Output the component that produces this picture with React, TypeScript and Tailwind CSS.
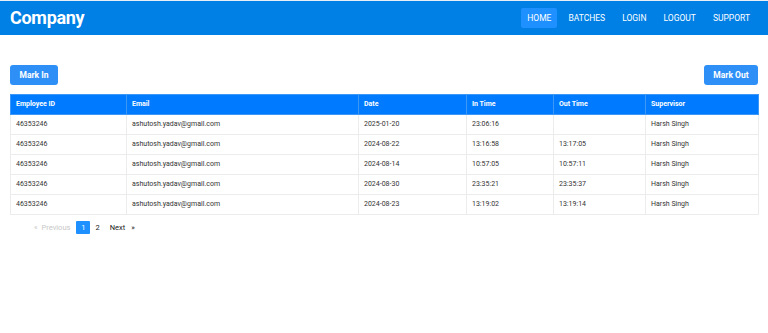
const NAV_ITEMS = ["HOME", "BATCHES", "LOGIN", "LOGOUT", "SUPPORT"];

const ROWS = [
  { id: "46353246", email: "ashutosh.yadav@gmail.com", date: "2025-01-20", inTime: "23:06:16", outTime: "", supervisor: "Harsh Singh" },
  { id: "46353246", email: "ashutosh.yadav@gmail.com", date: "2024-08-22", inTime: "13:16:58", outTime: "13:17:05", supervisor: "Harsh Singh" },
  { id: "46353246", email: "ashutosh.yadav@gmail.com", date: "2024-08-14", inTime: "10:57:05", outTime: "10:57:11", supervisor: "Harsh Singh" },
  { id: "46353246", email: "ashutosh.yadav@gmail.com", date: "2024-08-30", inTime: "23:35:21", outTime: "23:35:37", supervisor: "Harsh Singh" },
  { id: "46353246", email: "ashutosh.yadav@gmail.com", date: "2024-08-23", inTime: "13:19:02", outTime: "13:19:14", supervisor: "Harsh Singh" },
];

const Navbar = () => {
  return (
    <div className="flex h-[35px] w-full items-center justify-between border-t border-[#e8eef5] bg-[#0080e5] pl-[10px] pr-[12px]">
      <div className="text-[18px] font-bold leading-none tracking-[-0.3px] text-white">Company</div>
      <div className="flex items-center gap-[5px]">
        {NAV_ITEMS.map((item, index) => (
          <div
            key={index}
            className={
              index === 0
                ? "rounded-[2px] bg-[#1e90ff] px-[6px] py-[4px] text-[8.5px] text-white"
                : "px-[6px] py-[4px] text-[8.5px] text-white"
            }
          >
            {item}
          </div>
        ))}
      </div>
    </div>
  );
};

const App = () => {
  const cols = ["Employee ID", "Email", "Date", "In Time", "Out Time", "Supervisor"];
  const widths = ["w-[116px]", "w-[232px]", "w-[108px]", "w-[87px]", "w-[92px]", "w-[113px]"];

  return (
    <div className="h-[333px] w-[768px] bg-white font-['Roboto',sans-serif]">
      <Navbar />
      <div className="px-[10px] pt-[30px]">
        <div className="flex items-center justify-between">
          <button className="h-[20px] w-[48px] rounded-[3px] bg-[#2e90f7] text-[8.5px] font-bold text-white">Mark In</button>
          <button className="h-[20px] w-[54px] rounded-[3px] bg-[#2e90f7] text-[8.5px] font-bold text-white">Mark Out</button>
        </div>
        <table className="mt-[9px] w-[748px] table-fixed border-collapse text-[7px] text-[#333]">
          <thead>
            <tr className="h-[20px] bg-[#007bff] text-left text-white">
              {cols.map((c, i) => (
                <th key={i} className={`${widths[i]} border border-[#3d97f7] px-[5px] font-bold`}>
                  {c}
                </th>
              ))}
            </tr>
          </thead>
          <tbody>
            {ROWS.map((r, i) => (
              <tr key={i} className="h-[20px]">
                <td className="border border-[#ececec] px-[5px]">{r.id}</td>
                <td className="border border-[#ececec] px-[5px]">{r.email}</td>
                <td className="border border-[#ececec] px-[5px]">{r.date}</td>
                <td className="border border-[#ececec] px-[5px]">{r.inTime}</td>
                <td className="border border-[#ececec] px-[5px]">{r.outTime}</td>
                <td className="border border-[#ececec] px-[5px]">{r.supervisor}</td>
              </tr>
            ))}
          </tbody>
        </table>
        <div className="mt-[6px] flex items-center pl-[24px] text-[7.5px]">
          <span className="text-[#c8c8c8]">«</span>
          <span className="pl-[4px] pr-[6px] text-[#c8c8c8]">Previous</span>
          <span className="flex h-[13px] w-[14px] items-center justify-center rounded-[1px] bg-[#1e90ff] text-white">1</span>
          <span className="pl-[5px] pr-[10px] text-[#222]">2</span>
          <span className="pr-[6px] text-[#222]">Next</span>
          <span className="text-[#222]">»</span>
        </div>
      </div>
    </div>
  );
};

export default App;
